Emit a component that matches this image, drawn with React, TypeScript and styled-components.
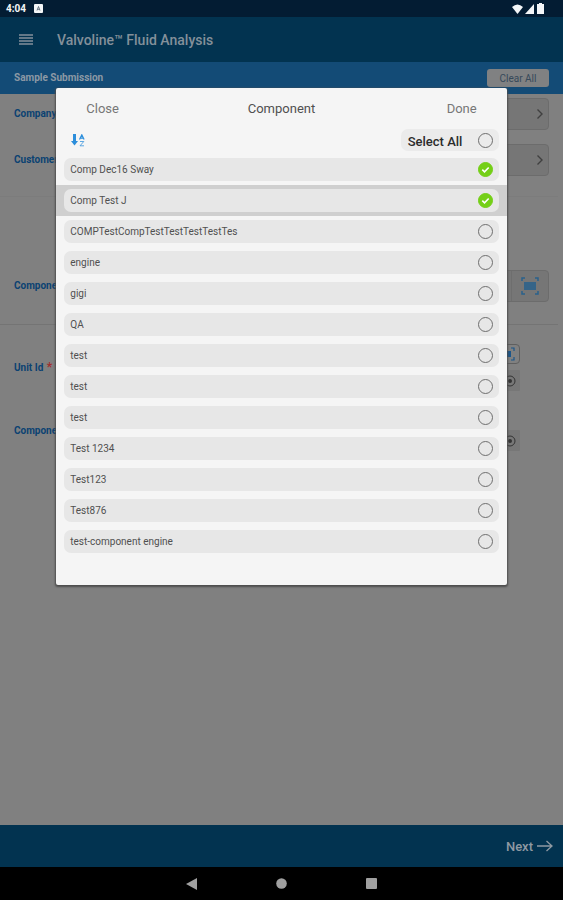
import React, { useState } from "react";
import styled, { createGlobalStyle, css } from "styled-components";

const GlobalStyle = createGlobalStyle`
  * { box-sizing: border-box; }
  body {
    margin: 0;
    background: #808080;
    font-family: Roboto, "Liberation Sans", sans-serif;
  }
  button, input { font-family: inherit; margin: 0; }
  svg { display: block; }
`;

const Screen = styled.div`
  min-height: 100vh;
  display: flex;
  flex-direction: column;
  background: #808080;
`;

const StatusBar = styled.div`
  display: flex;
  align-items: center;
  gap: 8px;
  height: 17px;
  padding: 0 18px 0 6px;
  background: #031c33;
  color: #f4f6f8;
  font-size: 10px;
  font-weight: 700;
`;

const StatusIcons = styled.div`
  display: flex;
  align-items: center;
  gap: 2px;
  margin-left: auto;
`;

const AppBar = styled.header`
  display: flex;
  align-items: center;
  gap: 21px;
  height: 45px;
  padding: 0 16px;
  background: #023350;
`;

const IconButton = styled.button`
  display: flex;
  align-items: center;
  justify-content: center;
  min-width: 20px;
  padding: 0;
  border: 0;
  background: none;
  color: #84909a;
`;

const AppTitle = styled.h1`
  margin: 0;
  color: #84909a;
  font-size: 14px;
  line-height: 22px;
  font-weight: 500;
`;

const SubBar = styled.div`
  display: flex;
  align-items: center;
  justify-content: space-between;
  height: 32px;
  padding: 0 14px;
  background: #134b76;
`;

const SubTitle = styled.h2`
  margin: 0;
  color: #8c99a5;
  font-size: 10px;
  line-height: 12px;
  font-weight: 700;
`;

const ClearButton = styled.button`
  width: 62px;
  height: 18px;
  padding: 0;
  border: 0;
  border-radius: 3px;
  background: #808182;
  color: #36495a;
  font-size: 10px;
`;

const Form = styled.main`
  flex: 1;
  display: flex;
  flex-direction: column;
`;

const Section = styled.section<{ $tall?: boolean }>`
  display: flex;
  flex-direction: column;
  gap: 14px;
  padding: 4px 14px 20px;
  ${(p) =>
    p.$tall &&
    css`
      padding-top: 73px;
      padding-bottom: 22px;
    `}
`;

const Divider = styled.hr<{ $faint?: boolean }>`
  width: calc(100% - 5px);
  height: 1px;
  margin: 0;
  border: 0;
  background: ${(p) => (p.$faint ? "#7c7c7c" : "#747474")};
`;

const Row = styled.div<{ $inset?: boolean; $top?: boolean }>`
  display: flex;
  align-items: ${(p) => (p.$top ? "flex-start" : "center")};
  justify-content: space-between;
  padding-right: ${(p) => (p.$inset ? "29px" : "0")};
`;

const FieldLabel = styled.span`
  color: #0b4272;
  font-size: 10px;
  line-height: 14px;
  font-weight: 700;
`;

const Required = styled.span`
  margin-left: 1px;
  color: #a32d2d;
  font-size: 12px;
`;

const PickerButton = styled.button`
  display: flex;
  align-items: center;
  justify-content: flex-end;
  width: 70%;
  height: 32px;
  padding: 0 4px;
  border: 1px solid #6c6c6c;
  border-radius: 4px;
  background: #767676;
  color: #404040;
`;

const ScanButton = styled(PickerButton)`
  padding: 0;
  color: #2a618c;
`;

const ScanCell = styled.span`
  display: flex;
  align-items: center;
  justify-content: center;
  align-self: stretch;
  width: 37px;
  border-left: 1px solid #6e6e6e;
`;

const UnitTools = styled.div`
  display: flex;
  flex-direction: column;
  gap: 6px;
`;

const SmallTool = styled.button<{ $outlined?: boolean }>`
  display: flex;
  align-items: center;
  justify-content: flex-end;
  width: 32px;
  height: ${(p) => (p.$outlined ? "20px" : "21px")};
  padding: 0 4px;
  border: ${(p) => (p.$outlined ? "1px solid #5f5f5f" : "0")};
  border-radius: ${(p) => (p.$outlined ? "4px" : "1px")};
  background: ${(p) => (p.$outlined ? "#808080" : "#777777")};
  color: ${(p) => (p.$outlined ? "#1b568a" : "#333333")};
`;

const MiniTool = styled(SmallTool)`
  margin-top: 6px;
`;

const UnitSection = styled.section`
  display: flex;
  flex-direction: column;
  gap: 33px;
  padding: 19px 14px;
`;

const Footer = styled.footer`
  display: flex;
  align-items: center;
  justify-content: flex-end;
  height: 42px;
  padding: 0 10px;
  background: #023350;
`;

const NextButton = styled.button`
  display: flex;
  align-items: center;
  gap: 4px;
  padding: 0;
  border: 0;
  background: none;
  color: #8f99a2;
  font-size: 13px;
  font-weight: 500;
`;

const SystemNav = styled.nav`
  display: flex;
  align-items: center;
  justify-content: center;
  gap: 70px;
  height: 33px;
  background: #000000;
  color: #a0a0a0;
`;

const Overlay = styled.div`
  position: absolute;
  top: 88px;
  left: 0;
  right: 0;
  display: flex;
  justify-content: center;
`;

const Dialog = styled.div`
  width: 80%;
  padding-bottom: 28px;
  border-radius: 2px;
  background: #f5f5f5;
  box-shadow: 0 1px 2px 1px #4c4c4c;
`;

const DialogHeader = styled.div`
  display: grid;
  grid-template-columns: 1fr auto 1fr;
  align-items: center;
  height: 41px;
  padding: 0 30px;
`;

const DialogTitle = styled.h2`
  margin: 0;
  color: #505050;
  font-size: 13px;
  font-weight: 400;
`;

const TextButton = styled.button<{ $end?: boolean }>`
  justify-self: ${(p) => (p.$end ? "end" : "start")};
  padding: 0;
  border: 0;
  background: none;
  color: #777777;
  font-size: 13px;
`;

const Toolbar = styled.div`
  display: flex;
  align-items: center;
  justify-content: space-between;
  padding: 0 8px 3px 12px;
`;

const SortButton = styled(IconButton)`
  color: #2c8edb;
`;

const SelectAll = styled.label`
  display: flex;
  align-items: center;
  justify-content: space-between;
  width: 98px;
  height: 22px;
  padding: 0 6px 0 7px;
  border-radius: 7px;
  background: #ebebeb;
  color: #2b2b2b;
  font-size: 13px;
  font-weight: 500;
`;

const SelectAllText = styled.span`
  padding-top: 3px;
`;

const List = styled.ul`
  margin: 0;
  padding: 0;
  list-style: none;
`;

const Item = styled.li<{ $active: boolean }>`
  padding: 4px 8px;
  background: ${(p) => (p.$active ? "#cfcfcf" : "transparent")};
`;

const ItemLabel = styled.label`
  display: flex;
  align-items: center;
  justify-content: space-between;
  height: 23px;
  padding: 0 6px;
  border-radius: 7px;
  background: #e7e7e7;
  color: #505050;
  font-size: 10px;
  line-height: 14px;
`;

const CheckWrap = styled.span`
  position: relative;
  display: flex;
  width: 15px;
  height: 15px;
`;

const CheckInput = styled.input`
  appearance: none;
  width: 15px;
  height: 15px;
  border: 1px solid #6e6e6e;
  border-radius: 50%;
  &:checked {
    border-color: #74cf17;
    background: #74cf17;
  }
`;

const CheckMark = styled.svg`
  position: absolute;
  inset: 0;
  pointer-events: none;
`;

function Check({ id, checked, onToggle }: { id: string; checked: boolean; onToggle: () => void }) {
  return (
    <CheckWrap>
      <CheckInput id={id} type="checkbox" checked={checked} onChange={onToggle} />
      {checked && (
        <CheckMark viewBox="0 0 15 15" width="15" height="15" fill="none" stroke="#ffffff" strokeWidth="1.6">
          <path d="M4.3 7.7l2.2 2.1 4.2-4.3" />
        </CheckMark>
      )}
    </CheckWrap>
  );
}

const Chevron = () => (
  <svg width="8" height="14" viewBox="0 0 8 14" fill="none" stroke="currentColor" strokeWidth="1.4">
    <path d="M1.5 2.5l4.5 4.5-4.5 4.5" />
  </svg>
);

const ScanIcon = () => (
  <svg width="18" height="18" viewBox="0 0 18 18" fill="none" stroke="currentColor" strokeWidth="1.5">
    <path d="M1 4V1h3M14 1h3v3M17 14v3h-3M4 17H1v-3" />
    <rect x="3" y="5" width="12" height="8" fill="currentColor" stroke="none" opacity="0.85" />
  </svg>
);

const SmallScanIcon = () => (
  <svg width="14" height="14" viewBox="0 0 14 14" fill="none" stroke="currentColor" strokeWidth="1.2">
    <path d="M1 4V1h3M10 1h3v3M13 10v3h-3M4 13H1v-3" />
    <rect x="2" y="4" width="8" height="6" fill="currentColor" stroke="none" />
  </svg>
);

const TargetIcon = () => (
  <svg width="12" height="12" viewBox="0 0 12 12" fill="none" stroke="currentColor">
    <circle cx="6" cy="6" r="5" />
    <circle cx="6" cy="6" r="2" fill="currentColor" stroke="none" />
  </svg>
);

const components = [
  "Comp Dec16 Sway",
  "Comp Test J",
  "COMPTestCompTestTestTestTestTes",
  "engine",
  "gigi",
  "QA",
  "test",
  "test",
  "test",
  "Test 1234",
  "Test123",
  "Test876",
  "test-component engine",
];

export default function App() {
  const [selected, setSelected] = useState<number[]>([0, 1]);
  const [active, setActive] = useState(1);
  const allSelected = selected.length === components.length;

  const toggle = (index: number) => {
    setActive(index);
    setSelected((s) => (s.includes(index) ? s.filter((i) => i !== index) : [...s, index]));
  };

  return (
    <>
      <GlobalStyle />
      <Screen>
        <StatusBar>
          <span>4:04</span>
          <svg width="9" height="9" viewBox="0 0 9 9">
            <rect width="9" height="9" rx="1" fill="#f4f6f8" />
            <path d="M3 6.5L4.5 2.5l1.5 4M3.5 5.3h2" stroke="#4b5b69" fill="none" strokeWidth=".8" />
          </svg>
          <StatusIcons>
            <svg width="11" height="10" viewBox="0 0 11 10" fill="currentColor">
              <path d="M0 3Q5.5-2 11 3L5.5 10z" />
            </svg>
            <svg width="9" height="10" viewBox="0 0 9 10" fill="currentColor">
              <path d="M9 0v10H0z" />
            </svg>
            <svg width="9" height="11" viewBox="0 0 9 11" fill="currentColor">
              <path d="M3 0h3v1h2v10H1V1h2z" />
            </svg>
          </StatusIcons>
        </StatusBar>
        <AppBar>
          <IconButton aria-label="Menu">
            <svg width="14" height="11" viewBox="0 0 14 11" fill="none" stroke="currentColor" strokeWidth="1.4">
              <path d="M0 1h14M0 4h14M0 7h14M0 10h14" />
            </svg>
          </IconButton>
          <AppTitle>Valvoline™ Fluid Analysis</AppTitle>
        </AppBar>
        <SubBar>
          <SubTitle>Sample Submission</SubTitle>
          <ClearButton>Clear All</ClearButton>
        </SubBar>
        <Form>
          <Section>
            <Row>
              <FieldLabel>Company</FieldLabel>
              <PickerButton aria-label="Company"><Chevron /></PickerButton>
            </Row>
            <Row>
              <FieldLabel>Customer</FieldLabel>
              <PickerButton aria-label="Customer"><Chevron /></PickerButton>
            </Row>
          </Section>
          <Divider $faint />
          <Section $tall>
            <Row>
              <FieldLabel>Component</FieldLabel>
              <ScanButton aria-label="Scan component">
                <ScanCell><ScanIcon /></ScanCell>
              </ScanButton>
            </Row>
          </Section>
          <Divider />
          <UnitSection>
            <Row $inset>
              <FieldLabel>Unit Id <Required>*</Required></FieldLabel>
              <UnitTools>
                <SmallTool $outlined aria-label="Scan unit"><SmallScanIcon /></SmallTool>
                <SmallTool aria-label="Unit options"><TargetIcon /></SmallTool>
              </UnitTools>
            </Row>
            <Row $inset $top>
              <FieldLabel>Component</FieldLabel>
              <MiniTool aria-label="Component options"><TargetIcon /></MiniTool>
            </Row>
          </UnitSection>
        </Form>
        <Footer>
          <NextButton>
            Next
            <svg width="16" height="12" viewBox="0 0 16 12" fill="none" stroke="currentColor" strokeWidth="1.3">
              <path d="M0 6h15M9.5 1l5.5 5-5.5 5" />
            </svg>
          </NextButton>
        </Footer>
        <SystemNav aria-label="System">
          <IconButton aria-label="Back">
            <svg width="11" height="12" viewBox="0 0 11 12" fill="#a0a0a0"><path d="M11 0v12L0 6z" /></svg>
          </IconButton>
          <IconButton aria-label="Home">
            <svg width="11" height="11" viewBox="0 0 11 11" fill="#a0a0a0"><circle cx="5.5" cy="5.5" r="5.3" /></svg>
          </IconButton>
          <IconButton aria-label="Recents">
            <svg width="11" height="11" viewBox="0 0 11 11" fill="#a0a0a0"><rect width="11" height="11" rx="1" /></svg>
          </IconButton>
        </SystemNav>
      </Screen>

      <Overlay>
        <Dialog role="dialog" aria-labelledby="dialog-title">
          <DialogHeader>
            <TextButton>Close</TextButton>
            <DialogTitle id="dialog-title">Component</DialogTitle>
            <TextButton $end>Done</TextButton>
          </DialogHeader>
          <Toolbar>
            <SortButton aria-label="Sort">
              <svg width="14" height="13" viewBox="0 0 14 13" fill="none" stroke="currentColor">
                <path d="M3.5 0v8" strokeWidth="3" />
                <path d="M0 7h7l-3.5 4.5z" fill="currentColor" stroke="none" />
                <path d="M8.5 5.5L10.8.8l2.3 4.7M9.3 4.2h3" strokeWidth="1.2" />
                <path d="M9 7.5h3.8L9 11.8h4" strokeWidth="1" opacity=".75" />
              </svg>
            </SortButton>
            <SelectAll htmlFor="select-all">
              <SelectAllText>Select All</SelectAllText>
              <Check
                id="select-all"
                checked={allSelected}
                onToggle={() => setSelected(allSelected ? [] : components.map((_, i) => i))}
              />
            </SelectAll>
          </Toolbar>
          <List>
            {components.map((name, i) => (
              <Item key={i} $active={i === active}>
                <ItemLabel htmlFor={`component-${i}`}>
                  {name}
                  <Check id={`component-${i}`} checked={selected.includes(i)} onToggle={() => toggle(i)} />
                </ItemLabel>
              </Item>
            ))}
          </List>
        </Dialog>
      </Overlay>
    </>
  );
}
